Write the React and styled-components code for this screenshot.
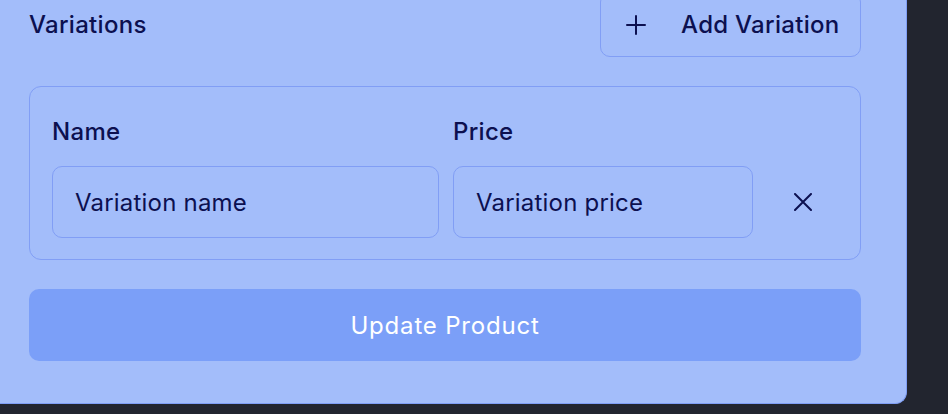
import React from 'react';
import styled, { createGlobalStyle } from 'styled-components';

const GlobalStyle = createGlobalStyle`
  html, body {
    margin: 0;
    padding: 0;
    background: #22252f;
    overflow: hidden;
  }
  body {
    font-family: Inter, "Noto Sans", sans-serif;
    color: #0c1050;
  }
  * {
    box-sizing: border-box;
  }
`;

const Panel = styled.section`
  width: 907px;
  height: 436px;
  margin-top: -32px;
  padding: 24px 45px 0 29px;
  background: #a3bdfa;
  border-right: 1px solid #7f9ef5;
  border-bottom: 1px solid #7f9ef5;
  border-bottom-right-radius: 12px;
  display: flex;
  flex-direction: column;
`;

const Header = styled.div`
  display: flex;
  justify-content: space-between;
  align-items: center;
  height: 65px;
`;

const Title = styled.h3`
  margin: 0;
  font-size: 24px;
  font-weight: 500;
  line-height: 30px;
  letter-spacing: 0.3px;
`;

const OutlineButton = styled.button`
  height: 65px;
  width: 261px;
  display: flex;
  align-items: center;
  gap: 35px;
  padding: 0 20px 0 25px;
  background: transparent;
  border: 1px solid #819ef5;
  border-radius: 10px;
  font-family: inherit;
  font-size: 24px;
  font-weight: 500;
  letter-spacing: 0.3px;
  color: inherit;
  white-space: nowrap;
`;

const Card = styled.div`
  margin-top: 29px;
  border: 1px solid #819ef5;
  border-radius: 12px;
  padding: 30px 22px 21px;
  display: grid;
  grid-template-columns: 387px 300px 72px;
  column-gap: 14px;
  row-gap: 19px;
`;

const Label = styled.label`
  font-size: 24px;
  font-weight: 500;
  line-height: 30px;
  letter-spacing: 0.3px;
`;

const Input = styled.input`
  height: 72px;
  width: 100%;
  padding: 0 22px;
  background: transparent;
  border: 1px solid #819ef5;
  border-radius: 10px;
  font-family: inherit;
  font-size: 24px;
  letter-spacing: 0.2px;
  color: inherit;
  outline: none;
  &::placeholder {
    color: #0c1050;
    opacity: 1;
  }
`;

const IconButton = styled.button`
  width: 72px;
  height: 72px;
  display: flex;
  align-items: center;
  justify-content: center;
  background: transparent;
  border: none;
  padding: 0;
  color: inherit;
`;

const SubmitButton = styled.button`
  margin-top: 29px;
  height: 72px;
  width: 100%;
  background: #7b9ff8;
  border: none;
  border-radius: 10px;
  font-family: inherit;
  font-size: 24px;
  font-weight: 400;
  letter-spacing: 0.8px;
  color: #ffffff;
`;

const PlusIcon = () => (
  <svg width="20" height="20" viewBox="0 0 20 20" fill="none" stroke="currentColor" strokeWidth="2" strokeLinecap="round">
    <path d="M10 1v18M1 10h18" />
  </svg>
);

const CloseIcon = () => (
  <svg width="18" height="18" viewBox="0 0 18 18" fill="none" stroke="currentColor" strokeWidth="2" strokeLinecap="round">
    <path d="M1 1l16 16M17 1L1 17" />
  </svg>
);

export default function App() {
  return (
    <>
      <GlobalStyle />
      <Panel>
        <Header>
          <Title>Variations</Title>
          <OutlineButton type="button">
            <PlusIcon />
            Add Variation
          </OutlineButton>
        </Header>
        <Card>
          <Label>Name</Label>
          <Label>Price</Label>
          <span />
          <Input placeholder="Variation name" />
          <Input placeholder="Variation price" />
          <IconButton type="button" aria-label="Remove variation">
            <CloseIcon />
          </IconButton>
        </Card>
        <SubmitButton type="button">Update Product</SubmitButton>
      </Panel>
    </>
  );
}
